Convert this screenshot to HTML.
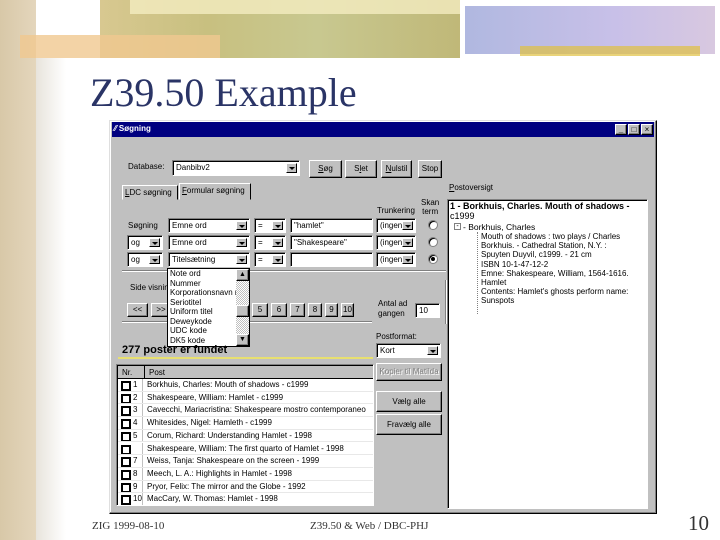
<!DOCTYPE html>
<html><head><meta charset="utf-8"><style>
*{margin:0;padding:0;box-sizing:border-box}
body{width:720px;height:540px;position:relative;overflow:hidden;background:#fff;font-family:"Liberation Sans",sans-serif}
.a{position:absolute}
.t{position:absolute;font-size:8px;color:#000;white-space:nowrap;line-height:10px}
.in{position:absolute;background:#fff;border-top:1px solid #808080;border-left:1px solid #808080;border-bottom:1px solid #fff;border-right:1px solid #fff;box-shadow:inset 1px 1px 0 #000;font-size:8px;padding:1px 3px;line-height:11px;white-space:nowrap;overflow:hidden}
.cb{position:absolute;width:11px;top:2px;bottom:2px;right:2px;background:#c0c0c0;border:1px solid;border-color:#fff #000 #000 #fff}
.cb:after{content:"";position:absolute;left:2px;top:3px;border-left:3px solid transparent;border-right:3px solid transparent;border-top:3px solid #000}
.bt{position:absolute;background:#c0c0c0;border:1px solid;border-color:#fff #000 #000 #fff;box-shadow:inset -1px -1px 0 #808080;font-size:8px;text-align:center;line-height:14px;white-space:nowrap;overflow:hidden}
.rd{position:absolute;width:10px;height:10px;border-radius:50%;background:#fff;border:1px solid #808080;box-shadow:inset 1px 1px 0 #000}
.hl{position:absolute;height:2px;border-top:1px solid #808080;border-bottom:1px solid #fff}
.row{position:absolute;left:0;width:255px;height:12.7px;font-size:8px;line-height:12px;border-bottom:1px solid #e8e8e8;white-space:nowrap;overflow:hidden}
.row .ck{position:absolute;left:3px;top:2px;width:10px;height:10px;border:2px solid #000;background:#fff}
.row .n{position:absolute;left:15px}
.row .p{position:absolute;left:24px;width:232px;overflow:hidden;padding-left:4px;border-left:1px solid #c0c0c0;height:13px}
</style></head><body>
<div class="a" style="left:0;top:0;width:36px;height:540px;background:linear-gradient(90deg,#d8c8a8,#e4d6bc)"></div>
<div class="a" style="left:36px;top:58px;width:30px;height:482px;background:linear-gradient(90deg,#e8e4dc,#fff)"></div>
<div class="a" style="left:100px;top:0;width:360px;height:58px;background:linear-gradient(90deg,#d8c890,#c8c080 30%,#c8c890 60%,#c0b878)"></div>
<div class="a" style="left:130px;top:0;width:330px;height:14px;background:#f4ecc0;opacity:.8"></div>
<div class="a" style="left:20px;top:35px;width:200px;height:23px;background:#f0c890;opacity:.8"></div>
<div class="a" style="left:465px;top:6px;width:250px;height:48px;background:linear-gradient(90deg,#b0b8e0,#c8c0e8 60%,#d8c8e0)"></div>
<div class="a" style="left:520px;top:46px;width:180px;height:10px;background:#e0c040;opacity:.7"></div>
<div class="a" style="left:90px;top:70px;font-family:'Liberation Serif',serif;font-size:40px;color:#2a3466;line-height:46px">Z39.50 Example</div>

<div class="a" style="left:109px;top:120px;width:548px;height:394px;background:#c0c0c0;border:1px solid;border-color:#dfdfdf #000 #000 #dfdfdf;box-shadow:inset -1px -1px 0 #808080,inset 1px 1px 0 #fff"></div>
<div class="a" style="left:112px;top:122px;width:542px;height:15px;background:#000080"></div>
<div class="t" style="left:114px;top:124px;color:#fff;font-weight:bold">⁄⁄ Søgning</div>
<div class="bt" style="left:615px;top:124px;width:12px;height:11px;line-height:9px;font-weight:bold">_</div>
<div class="bt" style="left:628px;top:124px;width:12px;height:11px;line-height:9px">□</div>
<div class="bt" style="left:641px;top:124px;width:12px;height:11px;line-height:9px">×</div>

<div class="t" style="left:128px;top:162px">Database:</div>
<div class="in" style="left:172px;top:160px;width:128px;height:16px">Danbibv2<div class="cb"></div></div>
<div class="bt" style="left:309px;top:160px;width:33px;height:18px;line-height:16px"><u>S</u>øg</div>
<div class="bt" style="left:345px;top:160px;width:32px;height:18px;line-height:16px">S<u>l</u>et</div>
<div class="bt" style="left:381px;top:160px;width:31px;height:18px;line-height:16px"><u>N</u>ulstil</div>
<div class="bt" style="left:418px;top:160px;width:24px;height:18px;line-height:16px">Stop</div>

<div class="a" style="left:122px;top:185px;width:56px;height:15px;border:1px solid;border-color:#fff #000 transparent #fff"></div>
<div class="t" style="left:125px;top:188px"><u>L</u>DC søgning</div>
<div class="a" style="left:179px;top:183px;width:72px;height:17px;border:1px solid;border-color:#fff #000 transparent #fff"></div>
<div class="t" style="left:182px;top:186px"><u>F</u>ormular søgning</div>

<div class="t" style="left:377px;top:206px">Trunkering</div>
<div class="t" style="left:421px;top:198px;line-height:9px;text-align:center">Skan<br>term</div>

<div class="t" style="left:128px;top:221px">Søgning</div>
<div class="in" style="left:168px;top:218px;width:82px;height:15px">Emne ord<div class="cb"></div></div>
<div class="in" style="left:254px;top:218px;width:32px;height:15px">=<div class="cb"></div></div>
<div class="in" style="left:290px;top:218px;width:83px;height:15px">"hamlet"</div>
<div class="in" style="left:376px;top:218px;width:40px;height:15px">(ingen)<div class="cb"></div></div>
<div class="rd" style="left:428px;top:220px"></div>

<div class="in" style="left:127px;top:235px;width:36px;height:15px">og<div class="cb"></div></div>
<div class="in" style="left:168px;top:235px;width:82px;height:15px">Emne ord<div class="cb"></div></div>
<div class="in" style="left:254px;top:235px;width:32px;height:15px">=<div class="cb"></div></div>
<div class="in" style="left:290px;top:235px;width:83px;height:15px">"Shakespeare"</div>
<div class="in" style="left:376px;top:235px;width:40px;height:15px">(ingen)<div class="cb"></div></div>
<div class="rd" style="left:428px;top:237px"></div>

<div class="in" style="left:127px;top:252px;width:36px;height:15px">og<div class="cb"></div></div>
<div class="in" style="left:168px;top:252px;width:82px;height:15px">Titelsætning<div class="cb"></div></div>
<div class="in" style="left:254px;top:252px;width:32px;height:15px">=<div class="cb"></div></div>
<div class="in" style="left:290px;top:252px;width:83px;height:15px"></div>
<div class="in" style="left:376px;top:252px;width:40px;height:15px">(ingen)<div class="cb"></div></div>
<div class="rd" style="left:428px;top:254px"><div class="a" style="left:2px;top:2px;width:4px;height:4px;background:#000;border-radius:50%"></div></div>

<div class="hl" style="left:122px;top:270px;width:324px"></div>
<div class="t" style="left:130px;top:283px">Side visning</div>
<div class="bt" style="left:127px;top:303px;width:21px;height:14px;line-height:12px">&lt;&lt;</div>
<div class="bt" style="left:151px;top:303px;width:20px;height:14px;line-height:12px">&gt;&gt;</div>
<div class="bt" style="left:252px;top:303px;width:16px;height:14px;line-height:12px">5</div>
<div class="bt" style="left:271px;top:303px;width:16px;height:14px;line-height:12px">6</div>
<div class="bt" style="left:290px;top:303px;width:15px;height:14px;line-height:12px">7</div>
<div class="bt" style="left:308px;top:303px;width:14px;height:14px;line-height:12px">8</div>
<div class="bt" style="left:325px;top:303px;width:13px;height:14px;line-height:12px">9</div>
<div class="bt" style="left:341px;top:303px;width:13px;height:14px;line-height:12px">10</div>
<div class="t" style="left:378px;top:299px;line-height:10px">Antal ad<br>gangen</div>
<div class="in" style="left:415px;top:303px;width:25px;height:15px">10</div>
<div class="hl" style="left:122px;top:321px;width:250px"></div>
<div class="a" style="left:445px;top:280px;width:2px;height:44px;border-left:1px solid #808080;border-right:1px solid #fff"></div>

<div class="a" style="left:167px;top:268px;width:83px;height:79px;background:#fff;border:1px solid #000"></div>
<div class="a" style="left:236px;top:269px;width:13px;height:77px;background:repeating-conic-gradient(#c0c0c0 0 25%,#fff 0 50%) 0 0/2px 2px"></div>
<div class="bt" style="left:236px;top:269px;width:13px;height:12px;line-height:10px;font-size:7px">▲</div>
<div class="bt" style="left:236px;top:305px;width:13px;height:12px"></div>
<div class="bt" style="left:236px;top:334px;width:13px;height:12px;line-height:10px;font-size:7px">▼</div>
<div class="t" style="left:170px;top:269px;line-height:9.5px;width:66px;overflow:hidden">Note ord<br>Nummer<br>Korporationsnavn m<br>Seriotitel<br>Uniform titel<br>Deweykode<br>UDC kode<br>DK5 kode</div>

<div class="t" style="left:376px;top:332px">Postformat:</div>
<div class="in" style="left:376px;top:343px;width:65px;height:15px">Kort<div class="cb"></div></div>
<div class="t" style="left:122px;top:344px;font-size:11px;font-weight:bold;line-height:12px">277 poster er fundet</div>
<div class="a" style="left:118px;top:357px;width:255px;height:2px;background:#e8e070"></div>

<div class="a" style="left:116px;top:364px;width:258px;height:142px;background:#fff;border:1px solid;border-color:#808080 #fff #fff #808080;box-shadow:inset 1px 1px 0 #000;overflow:hidden">
<div class="a" style="left:1px;top:1px;width:256px;height:13px;background:#c0c0c0;font-size:8px;line-height:13px;border-bottom:1px solid #000"><span class="a" style="left:4px">Nr.</span><span class="a" style="left:26px;height:12px;border-left:1px solid #000;padding-left:4px">Post</span></div>
<div class="a" style="left:1px;top:14px;width:256px">
<div class="row" style="top:0"><div class="ck"></div><span class="n">1</span><span class="p">Borkhuis, Charles: Mouth of shadows - c1999</span></div>
<div class="row" style="top:12.7px"><div class="ck"></div><span class="n">2</span><span class="p">Shakespeare, William: Hamlet - c1999</span></div>
<div class="row" style="top:25.4px"><div class="ck"></div><span class="n">3</span><span class="p">Cavecchi, Mariacristina: Shakespeare mostro contemporaneo</span></div>
<div class="row" style="top:38.1px"><div class="ck"></div><span class="n">4</span><span class="p">Whitesides, Nigel: Hamleth - c1999</span></div>
<div class="row" style="top:50.8px"><div class="ck"></div><span class="n">5</span><span class="p">Corum, Richard: Understanding Hamlet - 1998</span></div>
<div class="row" style="top:63.5px"><div class="ck"></div><span class="n"></span><span class="p">Shakespeare, William: The first quarto of Hamlet - 1998</span></div>
<div class="row" style="top:76.2px"><div class="ck"></div><span class="n">7</span><span class="p">Weiss, Tanja: Shakespeare on the screen - 1999</span></div>
<div class="row" style="top:88.9px"><div class="ck"></div><span class="n">8</span><span class="p">Meech, L. A.: Highlights in Hamlet - 1998</span></div>
<div class="row" style="top:101.6px"><div class="ck"></div><span class="n">9</span><span class="p">Pryor, Felix: The mirror and the Globe - 1992</span></div>
<div class="row" style="top:114.3px"><div class="ck"></div><span class="n">10</span><span class="p">MacCary, W. Thomas: Hamlet - 1998</span></div>
</div></div>

<div class="bt" style="left:376px;top:363px;width:66px;height:18px;line-height:16px;color:#808080;text-shadow:1px 1px 0 #fff;font-size:8px">Kopier til Matilda</div>
<div class="bt" style="left:376px;top:391px;width:66px;height:21px;line-height:19px">Vælg alle</div>
<div class="bt" style="left:376px;top:414px;width:66px;height:21px;line-height:19px">Fravælg alle</div>

<div class="t" style="left:449px;top:183px"><u>P</u>ostoversigt</div>
<div class="a" style="left:447px;top:199px;width:201px;height:310px;background:#fff;border:1px solid;border-color:#808080 #fff #fff #808080;box-shadow:inset 1px 1px 0 #000"></div>
<div class="t" style="left:450px;top:201px;font-size:9px;line-height:10px"><b>1 - Borkhuis, Charles. Mouth of shadows -</b><br>c1999</div>
<div class="a" style="left:454px;top:223px;width:7px;height:7px;border:1px solid #808080;font-size:7px;line-height:5px;text-align:center">-</div>
<div class="t" style="left:463px;top:222px;font-size:8.5px">- Borkhuis, Charles</div>
<div class="a" style="left:477px;top:232px;height:82px;border-left:1px dotted #808080"></div>
<div class="t" style="left:481px;top:232px;line-height:9.2px;font-size:8px">Mouth of shadows : two plays / Charles<br>Borkhuis. - Cathedral Station, N.Y. :<br>Spuyten Duyvil, c1999. - 21 cm<br>ISBN 10-1-47-12-2<br>Emne: Shakespeare, William, 1564-1616.<br>Hamlet<br>Contents: Hamlet's ghosts perform name:<br>Sunspots</div>

<div class="a" style="left:92px;top:520px;font-family:'Liberation Serif',serif;font-size:11px;color:#333">ZIG 1999-08-10</div>
<div class="a" style="left:310px;top:520px;font-family:'Liberation Serif',serif;font-size:11px;color:#333">Z39.50 &amp; Web / DBC-PHJ</div>
<div class="a" style="left:688px;top:511px;font-family:'Liberation Serif',serif;font-size:21px;color:#333">10</div>
</body></html>
